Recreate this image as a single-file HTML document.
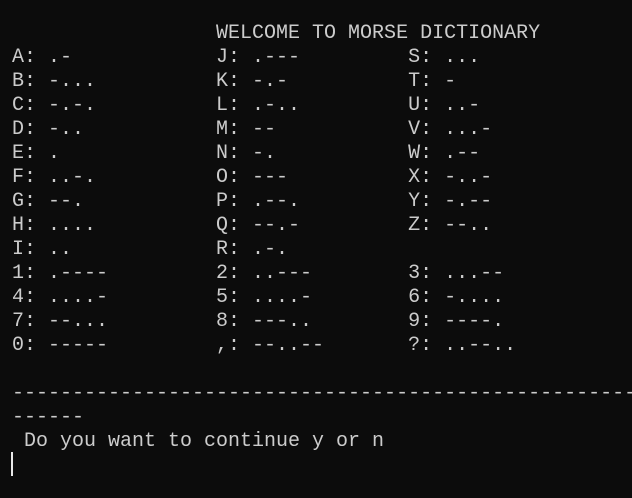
<!DOCTYPE html>
<html><head><meta charset="utf-8"><style>
html,body{margin:0;padding:0;background:#0c0c0c;width:632px;height:498px;overflow:hidden}
pre{margin:0;position:absolute;left:12px;top:22px;font-family:"Liberation Mono",monospace;font-size:20px;line-height:24px;color:#cccccc;white-space:pre}
.cur{position:absolute;left:11px;top:452px;width:2px;height:24px;background:#e8e8e8}
</style></head><body>
<pre>                 WELCOME TO MORSE DICTIONARY
A: .-            J: .---         S: ...
B: -...          K: -.-          T: -
C: -.-.          L: .-..         U: ..-
D: -..           M: --           V: ...-
E: .             N: -.           W: .--
F: ..-.          O: ---          X: -..-
G: --.           P: .--.         Y: -.--
H: ....          Q: --.-         Z: --..
I: ..            R: .-.
1: .----         2: ..---        3: ...--
4: ....-         5: ....-        6: -....
7: --...         8: ---..        9: ----.
0: -----         ,: --..--       ?: ..--..

----------------------------------------------------
------
 Do you want to continue y or n</pre>
<div class="cur"></div>
</body></html>
